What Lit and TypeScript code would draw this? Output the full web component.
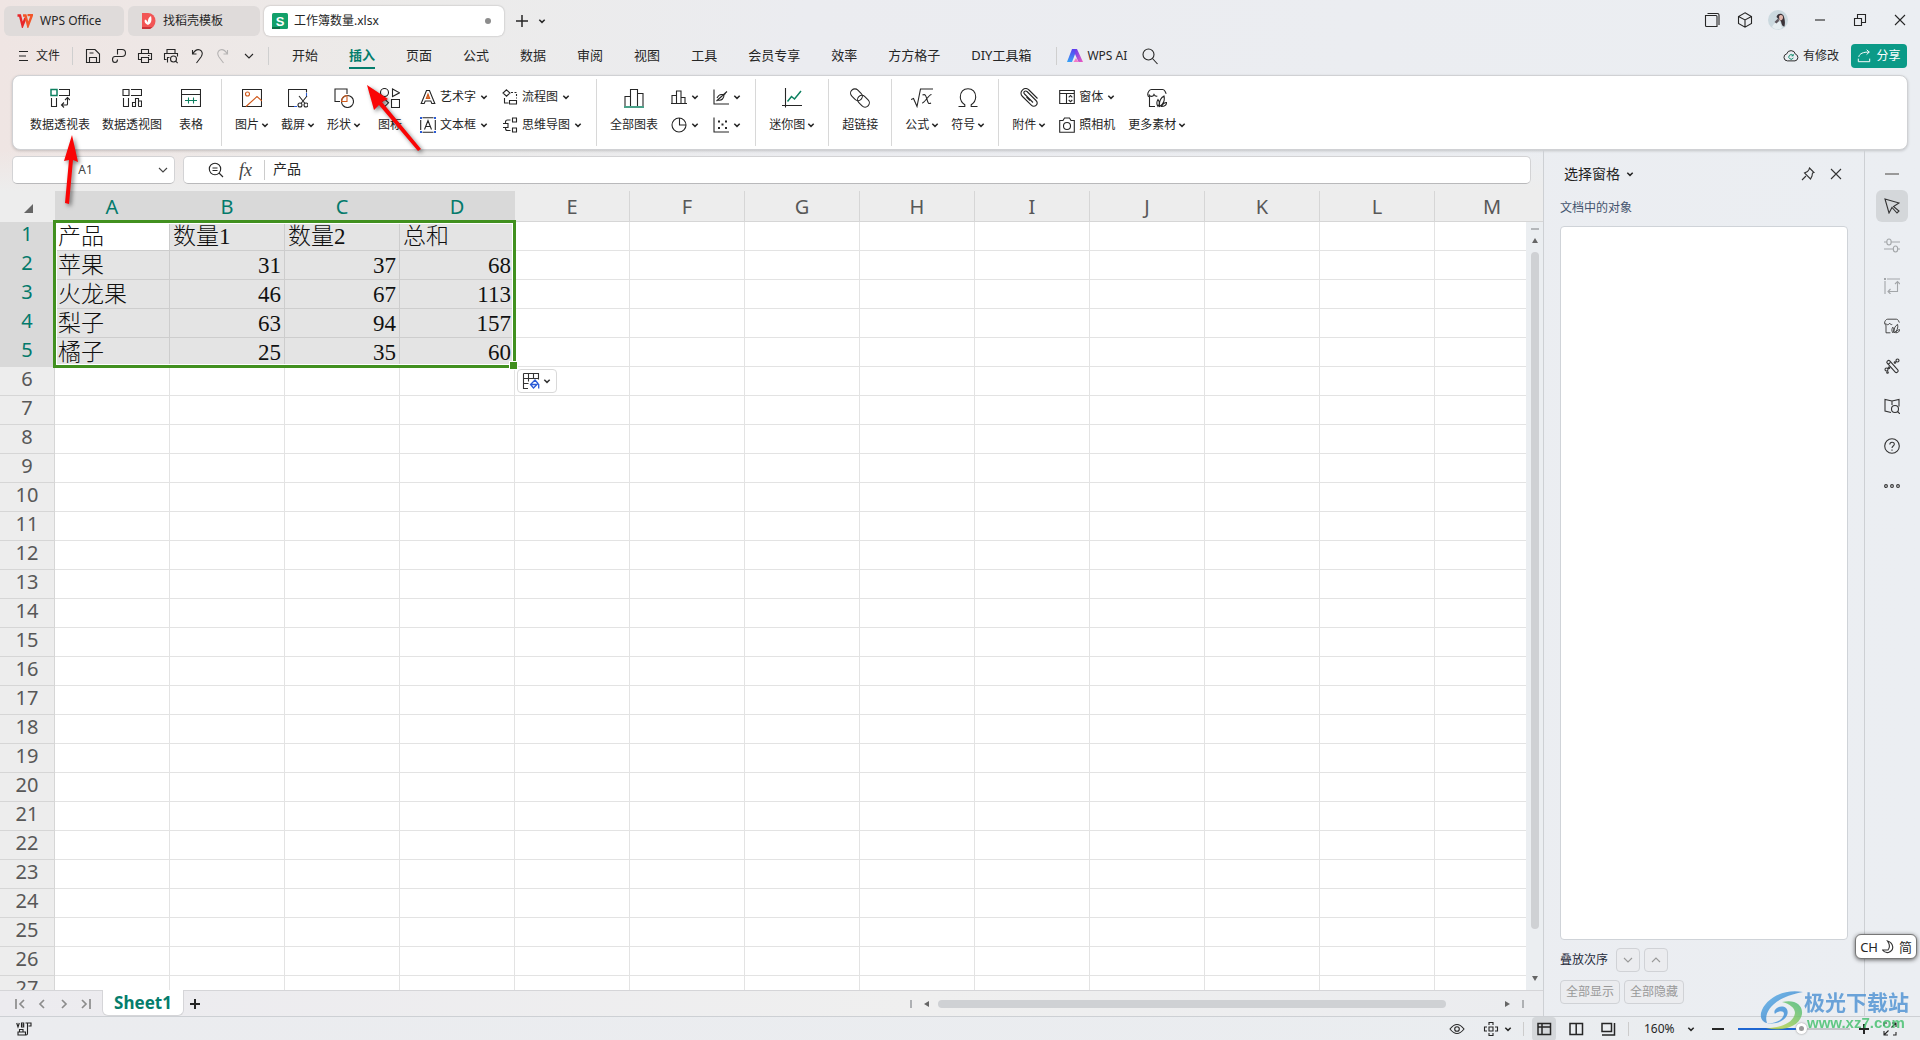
import { LitElement, html, svg, css, nothing, TemplateResult } from "lit";
import { customElement, property, state } from "lit/decorators.js";
import { classMap } from "lit/directives/class-map.js";

/* Line icons, drawn on a square grid whose side is given with each icon. */
const I = {
  menu: [12, svg`<path d="M2 1.5h9M2 6h7M2 10.5h9"/>`],
  save: [16, svg`<path d="M1.5 14.5v-13h8.500l4.500 4.500v8.500zM4.500 14.500v-5h7v5M4.500 5h4"/>`],
  output: [16, svg`<path d="M6.500 6.500V1.500h4.500a3.500 3.500 0 0 1 0 7H4q-2.500 0-2.500 3T4 14.500t2.500-3"/>`],
  print: [16, svg`<path d="M4.500 5V1.500h7V5M4 11.500H1.500V5.500h13v6H12M4.500 9.500h7v5h-7zM11 7.500h1.500"/>`],
  preview: [16, svg`<path d="M4 5V1.500h8V5M3.500 11.500h-2V5.500h13v3M4.500 14.500v-5h2"/><circle cx="10.500" cy="11" r="3"/><path d="M12.700 13.200l2 2"/>`],
  undo: [16, svg`<path d="M3.500 2v4H7.500M3.700 5.800C5.500 3 8.500 .8 11 2s3 4.200 1 7L7.500 15"/>`],
  redo: [16, svg`<path d="M12.500 2v4H8.500M12.300 5.800C10.500 3 7.500 .8 5 2s-3 4.200-1 7l4.500 6"/>`],
  down: [10, svg`<path d="M1 3l4 4 4-4"/>`],
  up: [10, svg`<path d="M1 7l4-4 4 4"/>`],
  caret: [8, svg`<path stroke-width="1.500" d="M1.300 2.800L4 5.400l2.700-2.600"/>`],
  search: [18, svg`<circle cx="7.500" cy="7.500" r="5.500"/><path d="M11.500 11.500l5 5.500"/>`],
  windows: [16, svg`<path d="M1.500 3.500h10.500a1 1 0 0 1 1 1v10H2.500a1 1 0 0 1-1-1zM3.500 1.500h10a1.500 1.500 0 0 1 1.500 1.500v10"/>`],
  cube: [16, svg`<path d="M8 .8l6.500 3.700v7L8 15.200 1.500 11.500v-7zM1.500 4.500L8 8l6.500-3.500M8 8v7.200"/>`],
  min: [12, svg`<path d="M1 6h10"/>`],
  restore: [14, svg`<path d="M1.500 5.500h7v7h-7zM4.500 5.500v-4h8v8h-4"/>`],
  close: [12, svg`<path d="M1 1l10 10M11 1L1 11"/>`],
  cloud: [18, svg`<path d="M5 14.500a4 4 0 0 1-.800-7.900 5 5 0 0 1 9.700.300 3.900 3.900 0 0 1-.400 7.600z"/><path stroke="#0d8a6c" d="M11.300 8.500a2.600 2.600 0 1 0 .3 2.500M11.500 6.800v2H9.500"/>`],
  share: [16, svg`<path d="M2 9c1-4 5-5.500 12-5.500M11 .8l3 2.700-3 2.800M1.500 11v3.500h13V11"/>`],
  pivot: [20, svg`<path stroke="#0d8060" stroke-width="1.500" d="M1 1.500h6v6H1z"/><path d="M9 1.500h10.500v6H9M1.500 10v8.500h5V10M17.500 10v6q0 1-1 1h-5M14 14.500L11.500 17l2.500 2.500M15 12l2.500-2.500L20 12"/>`],
  pivotChart: [20, svg`<path d="M1 1.500h6v6H1zM9 1.500h10.500v6H9M1.500 10v8.500h5V10M10.500 18.500v-4h3v4zM13.500 18.500v-8h3v8M16.500 13h3v5.500h-3"/>`],
  table: [20, svg`<path d="M.500 1.500h19v17H.500zM.500 6.500h19"/><path stroke="#0d8060" d="M4 12.500h12M7.500 9.500v6M12.500 9.500v6"/>`],
  picture: [20, svg`<path d="M.500 1.500h19v17H.500z"/><g stroke="#d05a1c"><circle cx="5.500" cy="6" r="2"/><path d="M4 18.500L15 8.500l5 4.500"/></g>`],
  cut: [20, svg`<path d="M6 18.500H.500v-17h18v3"/><path stroke="#2a5bd7" d="M18.500 5v3.500M6 18.500h3"/><path d="M11 8l6 7.500M19 8l-6 7.500"/><circle cx="12" cy="17" r="2"/><circle cx="18" cy="17" r="2"/>`],
  shapes: [20, svg`<path d="M6 13.500H1V1h12v5"/><circle cx="13.500" cy="13.500" r="6"/><path stroke="#d05a1c" d="M7.500 13.500c.300-3.500 2.500-5.700 5.500-6v6z"/>`],
  symbols: [20, svg`<circle cx="4.500" cy="4.500" r="4"/><path d="M12.500 1v7.500l7-3.700zM4.500 10.800l4 4-4 4-4-4zM11.500 11.500h8v8h-8z"/>`],
  wordArt: [16, svg`<path d="M1.200 14.500L6.500 1.500h3l5.300 13h-3l-1-2.500H5.200l-1 2.500z"/><path fill="#e07b3c" stroke="#d05a1c" d="M6.300 9.500L8 5l1.700 4.500z"/>`],
  textBox: [16, svg`<path d="M2.500.700h11M2.500 15.300h11M.7 3v10M15.300 3v10M4.500 12.500L8 3.500l3.500 9M5.700 9.500h4.600"/><path stroke="#2a5bd7" stroke-width="2" d="M0 1h2M14 1h2M0 15h2M14 15h2"/>`],
  flow: [16, svg`<path d="M4.500.8L8 4 4.500 7.200 1 4zM2.500 9v5h4M7.500 11.500h7v3.500h-7z"/><path stroke-dasharray="2 1.500" d="M9 3.500h5.500v6"/>`],
  mind: [16, svg`<path d="M1 6.500h5v4H1M10.500 1h4v4h-4zM10.500 11h4v4h-4zM3.500 6.500V5q0-2 2-2h3M3.500 10.500v1q0 2 2 2h3"/>`],
  chart: [20, svg`<path d="M1 18V8.500h5.500M6.500 18V1.500h7V18M13.500 5.500H19V18"/><path stroke="#0d8060" stroke-width="1.500" d="M0 19h20"/>`],
  bars: [16, svg`<path d="M1 14V6.500h4.500M5.500 14V2h4.500v12M10 8.500h4V14M0 14.500h16"/>`],
  line: [16, svg`<path d="M1 .5v14.500h15M3.500 12L14 2.500M4 9q2-4 5-3.500T12.500 4M5 11c4 1 6-2 6-5"/>`],
  pie: [16, svg`<circle cx="8" cy="8" r="7"/><path d="M8.500 1v7H15"/>`],
  scatter: [16, svg`<path d="M1 .5v14.500h15"/><path stroke-width="2" d="M5 4.500h2M12 4.500h2M8.500 7.500h2M5 11h2M12 11h2"/>`],
  spark: [20, svg`<path d="M3.500 0v19.500M0 17.500h20"/><path stroke="#0d8060" stroke-width="1.500" d="M5.500 13.500l4-5 3 2.500 6.500-8"/>`],
  link: [22, svg`<rect x="1" y="3.500" width="13" height="8.500" rx="4.200" transform="rotate(45 7.500 7.700)"/><rect x="8" y="10" width="13" height="8.500" rx="4.200" transform="rotate(45 14.500 14.200)"/>`],
  formula: [22, svg`<path d="M0 12.500l2.500-1L6 19.500 9.500 2H22M11.500 8c3-1.500 3.500 1 4.500 4.500s1.500 5 4 3.500M20.500 7.500c-3 0-7 9-9.500 8.500"/>`],
  omega: [22, svg`<path d="M1.500 19.500h6.300v-1.800C5 15.900 3.300 13.400 3.300 10c0-5 3.200-8.300 7.700-8.300s7.700 3.300 7.700 8.300c0 3.400-1.700 5.900-4.500 7.700v1.800h6.300"/>`],
  clip: [20, svg`<path d="M14 14.500L5.500 6c-1.700-1.700.8-4.200 2.500-2.500l9 9c3.200 3.200-1.500 8-4.700 4.700L3.500 8.500C-1 4 5.500-2 10 2l8.500 8.500M11 12.500L7.500 9"/>`],
  form: [16, svg`<path d="M.7 1.500h14.600v13H.7zM.7 4.500h14.600M7.500 4.500v10"/><path d="M9.700 8.300l1.800-1.700 1.800 1.700M9.700 11l1.800 1.700 1.800-1.700"/>`],
  camera: [16, svg`<path d="M.7 3.500H4L5.500 1h5L12 3.500h3.300v11.800H.7z"/><circle cx="8" cy="9" r="3.500"/>`],
  material: [20, svg`<path d="M8 18.500H2.500V9C0 8 .5 5 1.800 3.200Q3 1.500 4.500 1.500h11q1.500 0 2.500 1.700l1.200 2.500M2 6.500c1 2.500 4 2.500 5 0 .8 1.500 2 2 3.300 1.500"/><path d="M11 18.500c-2-3-1-5.500 0-7 1.500 2 2 4.500 0 7zM12.500 18.500C12 14 13.500 10 17 8c1 4-.5 8.500-4.500 10.500zM14.500 18.500c1-2 3-4 5-4 0 2.500-2 4-5 4z"/>`],
  zoomOut: [16, svg`<circle cx="7" cy="7" r="5.700"/><path d="M11 11l4 4M4.500 6h5M4.500 8.500h5"/>`],
  pin: [14, svg`<path d="M8.500 1l4.500 4.500-1.500.5-.500 3-1.500 3-6-6 3-1.500L8 2.500zM5 9l-4 4"/>`],
  pointer: [16, svg`<path d="M1 1l14 4-5.500 3.500L15 13l-2 2-5-5.500L5 15z"/>`],
  sliders: [16, svg`<ellipse cx="5" cy="4" rx="2.200" ry="3"/><ellipse cx="11.500" cy="11" rx="2.200" ry="3"/><path d="M0 4h2.800M7.200 4H16M0 11h9.300M13.700 11H16"/>`],
  transform: [16, svg`<path d="M3 1h13M1 3v13M13.500 4v9.500H4.500M11 6l2.500-2.500L16 6M6.500 11L4 13.500 6.500 16"/><path stroke-width="2" d="M0 1h2"/>`],
  wand: [16, svg`<rect x="-1.700" y="-7.500" width="3.400" height="15" rx="1.500" transform="translate(8.500 8.500) rotate(-42)"/><path d="M4 6.500l2.500-2.200"/><circle cx="13.500" cy="2.500" r="1.500"/><circle cx="11" cy="4.500" r=".8"/><circle cx="2.500" cy="11.500" r="1.500"/><circle cx="5" cy="9.800" r=".8"/><circle cx="3.500" cy="14.500" r=".8"/>`],
  book: [16, svg`<path d="M7 14.500L1 13V1.500L8 3l7-1.500v7M8 3v4"/><circle cx="11" cy="11" r="3.500"/><path d="M13.500 13.500L16 16"/>`],
  help: [16, svg`<circle cx="8" cy="8" r="7.300"/><path d="M5.800 6.500c0-3 4.500-3 4.500-.300C10.300 8 8 8 8 10M8 11.500v1.300"/>`],
  dots: [16, svg`<circle cx="2" cy="8" r="1.400"/><circle cx="8" cy="8" r="1.400"/><circle cx="14" cy="8" r="1.400"/>`],
  eye: [16, svg`<path d="M1 8q7-9 14 0-7 9-14 0z"/><circle cx="8" cy="8" r="2.300"/>`],
  target: [16, svg`<path d="M6 6h4v4H6zM6 4V1.500h4V4M6 12v2.500h4V12M4 6H1.500v4H4M12 6h2.500v4H12"/>`],
  normal: [16, svg`<path stroke-width="1.500" d="M2 2.500h12.500v11H2zM2 6h12.500M6 2.500v11"/>`],
  page: [16, svg`<path stroke-width="1.500" d="M2 2.500h12.500v11H2zM8.200 2.500v11"/>`],
  breaks: [16, svg`<path stroke-width="1.500" d="M2 2.500h9.500v8H2zM14.500 2v12H2"/>`],
  plus: [14, svg`<path stroke-width="1.500" d="M7 1v12M1 7h12"/>`],
  bigPlus: [12, svg`<path stroke-width="2" d="M6 1v10M1 6h10"/>`],
  bigMinus: [12, svg`<path stroke-width="2" d="M0 6h12"/>`],
  full: [16, svg`<path d="M10 2h4v4M14 2L9.500 6.500M6 14H2v-4M2 14l4.500-4.500M2 5V2h3M14 11v3h-3"/>`],
  first: [12, svg`<path stroke-width="1.700" d="M2 1v10M10 2L6 6l4 4"/>`],
  prev: [12, svg`<path stroke-width="1.700" d="M8 2L4 6l4 4"/>`],
  next: [12, svg`<path stroke-width="1.700" d="M4 2l4 4-4 4"/>`],
  last: [12, svg`<path stroke-width="1.700" d="M10 1v10M2 2l4 4-4 4"/>`],
  fill: [18, svg`<path d="M1.500 1.500h15v6M1.500 6.500h15M1.500 1.500v15H6M1.500 11.500h5M6.500 1.500v8M11.500 1.500v5"/><path stroke="#2a5bd7" stroke-width="1.300" d="M8.500 12.500L13 8l3 3.500-4.500 4.500zM8.500 12.500h6.500M16.700 12v4.500"/>`],
} as const;
type Icon = keyof typeof I;

const icon = (name: Icon, size?: number): TemplateResult => {
  const [box, body] = I[name];
  const s = size ?? box;
  return html`<svg width=${s} height=${s} viewBox="0 0 ${box} ${box}" fill="none" stroke="currentColor"
    stroke-width="1.100" aria-hidden="true">${body}</svg>`;
};

const shared = css`
  * { box-sizing: border-box; }
  svg { display: block; flex: none; }
  button, input, select {
    font: inherit; color: inherit; background: none; border: 0; padding: 0; margin: 0; outline: 0; border-radius: 0;
  }
  button { display: flex; align-items: center; justify-content: center; white-space: nowrap; flex: none; }
`;

@customElement("tool-button")
class ToolButton extends LitElement {
  @property() icon: Icon = "table";
  @property() label = "";
  @property({ type: Boolean }) menu = false;
  @property({ type: Boolean }) small = false;
  static styles = [shared, css`
    :host { display: block; }
    .tool { min-width: 34px; flex-direction: column; gap: 8px; line-height: 16px; }
    .tool .art { height: 22px; display: flex; align-items: center; }
    .text { display: flex; align-items: center; gap: 2px; }
    .small { gap: 4px; line-height: 16px; height: 16px; }
    .small .text { gap: 4px; }
  `];
  render() {
    const caret = this.menu ? icon("caret") : nothing;
    if (!this.small) {
      return html`<button class="tool"><span class="art">${icon(this.icon)}</span>
        <span class="text">${this.label}${caret}</span></button>`;
    }
    return this.label
      ? html`<button class="small">${icon(this.icon)}<span class="text">${this.label}${caret}</span></button>`
      : html`<button class="small" aria-label=${this.icon}>${icon(this.icon)}${caret}</button>`;
  }
}

type Tool = [Icon, string, boolean?];
const GROUPS: (Tool | Tool[])[][] = [
  [["pivot", "数据透视表"], ["pivotChart", "数据透视图"], ["table", "表格"]],
  [["picture", "图片", true], ["cut", "截屏", true], ["shapes", "形状", true], ["symbols", "图标"],
    [["wordArt", "艺术字", true], ["textBox", "文本框", true]],
    [["flow", "流程图", true], ["mind", "思维导图", true]]],
  [["chart", "全部图表"], [["bars", "", true], ["pie", "", true]], [["line", "", true], ["scatter", "", true]]],
  [["spark", "迷你图", true]],
  [["link", "超链接"]],
  [["formula", "公式", true], ["omega", "符号", true]],
  [["clip", "附件", true], [["form", "窗体", true], ["camera", "照相机"]], ["material", "更多素材", true]],
];

@customElement("ribbon-bar")
class RibbonBar extends LitElement {
  static styles = [shared, css`
    :host { display: block; }
    .ribbon {
      display: flex; align-items: stretch; gap: 12px; height: 75px; padding: 3px 17px; overflow: hidden;
      background: #fff; border: 1px solid #d0d1d4; border-radius: 8px; font-size: 12px;
      box-shadow: 0 1px 3px rgba(0, 0, 0, .18);
    }
    .sep { width: 1px; margin: 0 1px; background: #d8d8d8; }
    .one { padding-top: 8px; }
    .col { display: flex; flex-direction: column; gap: 12px; padding: 10px 1px 0; }
  `];
  render() {
    const tool = (t: Tool, small = false) =>
      html`<tool-button class=${small ? "" : "one"} .icon=${t[0]} .label=${t[1]} .menu=${!!t[2]} .small=${small}></tool-button>`;
    return html`<div class="ribbon">${GROUPS.map((g, i) => html`
      ${i ? html`<span class="sep"></span>` : nothing}
      ${g.map((t) => Array.isArray(t[0])
        ? html`<div class="col">${(t as Tool[]).map((s) => tool(s, true))}</div>`
        : tool(t as Tool))}`)}</div>`;
  }
}

const DATA: (string | number)[][] = [
  ["产品", "数量1", "数量2", "总和"],
  ["苹果", 31, 37, 68],
  ["火龙果", 46, 67, 113],
  ["梨子", 63, 94, 157],
  ["橘子", 25, 35, 60],
];
const COLS = [..."ABCDEFGHIJKLM"];
const ROWS = Array.from({ length: 27 }, (_, i) => i);

@customElement("sheet-grid")
class SheetGrid extends LitElement {
  static styles = [shared, css`
    :host { display: flex; flex: 1; min-height: 0; position: relative; background: #ededed; }
    .view { flex: 1; min-width: 0; overflow: hidden; position: relative; background: #fff; }
    table { border-collapse: separate; border-spacing: 0; table-layout: fixed; width: 1550px; }
    .rowhead { width: 55px; }
    th {
      font-weight: 400; font-size: 20px; line-height: 24px; color: #585858; background: #ededed; padding: 0;
      border-right: 1px solid #d6d6d6; border-bottom: 1px solid #d6d6d6; text-align: center; vertical-align: top;
    }
    thead th { height: 31px; padding-top: 4px; }
    tbody th { height: 29px; }
    thead th:first-child { border-color: #ededed; }
    .corner { margin: 9px 0 0 24px; }
    th.sel { background: #d9d9d9; border-color: #d9d9d9; color: #037a6b; }
    td {
      height: 29px; padding: 2px 3px 0; border-right: 1px solid #e3e3e3; border-bottom: 1px solid #e3e3e3; vertical-align: top;
      font: 300 23px/26px "Liberation Serif", "Noto Sans CJK SC", serif; color: #111; white-space: nowrap; overflow: hidden;
    }
    td.sel { background: #e4e4e4; border-color: #cdcdcd; }
    td.active { background: #fff; }
    td.num { text-align: right; }
    .range { position: absolute; left: 53px; top: 29px; width: 463px; height: 148px; border: 3px solid #41901f; pointer-events: none; }
    .range::before { content: ""; position: absolute; inset: 0; border: 1px solid #fff; }
    .range::after {
      content: ""; position: absolute; right: -5px; bottom: -5px; width: 7px; height: 7px;
      background: #41901f; border: 1px solid #fff;
    }
    .paste {
      position: absolute; left: 517px; top: 178px; width: 40px; height: 24px; gap: 3px; background: #fff;
      border: 1px solid #d9d9d9; border-radius: 4px; color: #333; padding-right: 2px;
    }
    .vbar { width: 17px; display: flex; flex-direction: column; align-items: center; background: #ebeef1; color: #666; }
    .cap { width: 17px; height: 31px; background: #ededed; border-bottom: 1px solid #d6d6d6; }
    .split { width: 8px; height: 2px; margin: 6px 0 8px; background: #b4b7ba; }
    .thumb { width: 8px; flex: 1; margin: 9px 0 47px; border-radius: 4px; background: #cfd1d4; }
    .tri { width: 0; height: 0; border: 3px solid transparent; }
    .tri.up { border-top: 0; border-bottom: 5px solid #666; }
    .tri.down { border-bottom: 0; border-top: 5px solid #666; margin-bottom: 9px; }
  `];
  render() {
    return html`
      <div class="view">
        <table>
          <colgroup><col class="rowhead">${COLS.map(() => html`<col>`)}</colgroup>
          <thead><tr>
            <th aria-label="全选"><svg class="corner" width="9" height="9"><path d="M9 0v9H0z" fill="#666"/></svg></th>
            ${COLS.map((c, i) => html`<th scope="col" class=${classMap({ sel: i < 4 })}>${c}</th>`)}
          </tr></thead>
          <tbody>${ROWS.map((r) => html`<tr>
            <th scope="row" class=${classMap({ sel: r < 5 })}>${r + 1}</th>
            ${COLS.map((_, c) => {
              const v = DATA[r]?.[c];
              return html`<td class=${classMap({ sel: v !== undefined, active: r === 0 && c === 0, num: typeof v === "number" })}>${v ?? nothing}</td>`;
            })}</tr>`)}</tbody>
        </table>
        <div class="range"></div>
        <button class="paste" aria-label="粘贴选项">${icon("fill")}${icon("caret")}</button>
      </div>
      <div class="vbar">
        <span class="cap"></span><span class="split"></span><span class="tri up"></span>
        <span class="thumb"></span><span class="tri down"></span>
      </div>`;
  }
}

@customElement("selection-pane")
class SelectionPane extends LitElement {
  static styles = [shared, css`
    :host {
      display: flex; flex-direction: column; width: 321px; flex: none; padding: 14px 16px 12px; font-size: 12px; line-height: 18px;
      border-left: 1px solid #cdd0d4;
    }
    .head { display: flex; align-items: center; height: 20px; }
    .title { font-size: 14px; gap: 6px; margin: 0 auto 0 4px; color: #222; }
    .icons { display: flex; gap: 15px; margin-right: 6px; color: #333; }
    .sub { margin: 15px 0 9px; color: #44546e; }
    .list { flex: 1; margin: 0; padding: 0; background: #fff; border: 1px solid #cfd3d8; border-radius: 4px; list-style: none; }
    .order { display: flex; align-items: center; gap: 4px; margin: 8px 0; color: #1f2a3a; }
    .order span { margin-right: 4px; }
    .actions { display: flex; gap: 4px; }
    .box { height: 24px; border: 1px solid #d0d2d6; border-radius: 4px; color: #999; padding: 0 5px; background: #ebecef; }
    .order .box { width: 24px; padding: 0; }
  `];
  render() {
    return html`
      <div class="head">
        <button class="title">选择窗格${icon("caret")}</button>
        <div class="icons"><button aria-label="固定">${icon("pin")}</button><button aria-label="关闭">${icon("close")}</button></div>
      </div>
      <div class="sub">文档中的对象</div>
      <ul class="list" aria-label="文档中的对象"></ul>
      <div class="order"><span>叠放次序</span>
        <button class="box" aria-label="下移">${icon("down")}</button>
        <button class="box" aria-label="上移">${icon("up")}</button></div>
      <div class="actions"><button class="box">全部显示</button><button class="box">全部隐藏</button></div>`;
  }
}

const MENUS = ["开始", "插入", "页面", "公式", "数据", "审阅", "视图", "工具", "会员专享", "效率", "方方格子", "DIY工具箱"];
const QUICK: [Icon, string][] = [["save", "保存"], ["output", "输出"], ["print", "打印"], ["preview", "打印预览"], ["undo", "撤销"], ["redo", "恢复"]];
const RAIL: [Icon, string][] = [["pointer", "选择"], ["sliders", "属性"], ["transform", "变换"], ["material", "素材"],
  ["wand", "美化"], ["book", "查找"], ["help", "帮助"], ["dots", "更多"]];

@customElement("app-root")
class AppRoot extends LitElement {
  @state() private zoom = 57;
  static styles = [shared, css`
    :host {
      display: flex; flex-direction: column; height: 100vh; overflow: hidden; position: relative; color: #262626;
      font: 12px/16px "Noto Sans", "Noto Sans CJK SC", sans-serif;
      background: linear-gradient(90deg, #efe5e3 0, #ecebea 22%, #ebecf0 42%, #ebeef2 100%);
    }
    .top { display: flex; height: 36px; align-items: flex-end; }
    .tabs { display: flex; gap: 4px; padding-left: 4px; flex: 1; align-items: center; }
    .tab { height: 30px; border-radius: 6px; background: #dfdbda; justify-content: flex-start; gap: 7px; padding: 0 13px; }
    .home { width: 120px; }
    .docer { width: 132px; }
    .file { width: 240px; padding: 0 13px 0 8px; gap: 6px; background: #fff; box-shadow: 0 0 2px rgba(0, 0, 0, .3); }
    .dot { width: 6px; height: 6px; border-radius: 3px; background: #8c8c8c; margin-left: auto; }
    .add { width: 28px; height: 30px; margin-right: -2px; }
    .win { display: flex; height: 32px; align-items: center; }
    .win button { width: 33px; height: 32px; }
    .win .ctl { width: 40px; }
    .win .avatar { margin-right: 6px; }
    .menu { display: flex; height: 39px; align-items: center; padding: 0 13px 0 17px; }
    .filebtn { gap: 7px; }
    .bar { width: 1px; height: 18px; background: #cfcfcf; flex: none; }
    .filebtn + .bar { margin: 0 7px 0 12px; }
    .quick { display: flex; }
    .quick button { width: 26px; height: 26px; }
    .quick .off { color: #b5b3b3; }
    .quick + .bar { margin: 0 23px 0 6px; }
    nav { display: flex; gap: 31px; font-size: 13px; line-height: 20px; padding-top: 1px; margin-right: 25px; }
    nav a { color: inherit; text-decoration: none; white-space: nowrap; border-bottom: 2px solid transparent; padding-top: 2px; height: 26px; }
    nav a.on { color: #047d6c; font-weight: 700; border-color: #047d6c; }
    .ai { gap: 4px; margin: 0 14px 0 10px; }
    .modified { margin-left: auto; gap: 4px; }
    .share { width: 56px; height: 24px; margin-left: 12px; gap: 5px; color: #fff; background: #0b9a87; border-radius: 4px; }
    ribbon-bar { margin: 0 12px; }
    .main { flex: 1; display: flex; min-height: 0; }
    .book { flex: 1; min-width: 0; display: flex; flex-direction: column; }
    .fx { display: flex; gap: 8px; padding: 6px 12px 7px; background: linear-gradient(rgba(237, 237, 237, 0), #ededed); }
    .field { display: flex; align-items: center; height: 28px; background: #fff; border: 1px solid #d3d3d5; border-bottom-color: #b9b9bb; border-radius: 5px; }
    .name { width: 163px; padding-right: 6px; color: #444; }
    .name input { width: 100%; min-width: 0; text-align: center; }
    .formula { flex: 1; padding-left: 24px; }
    .formula input { flex: 1; min-width: 0; font-size: 14px; padding: 0 0 4px 8px; height: 20px; border-left: 1px solid #ccc; margin-left: 12px; }
    .fn { font: italic 18px/20px "Liberation Serif", serif; margin-left: 15px; color: #444; }
    .sheets { display: flex; height: 26px; flex: none; align-items: center; border-top: 1px solid #d5d5d8; background: linear-gradient(90deg, #ecebef, #efefef 60%, #ebecef); }
    .go { display: flex; color: #8c8c8c; padding-left: 9px; }
    .go button { width: 22px; height: 24px; }
    .sheet {
      width: 82px; height: 26px; margin: -1px 5px 0 5px; background: #fff; border: 1px solid #d5d5d8; border-top: 0;
      border-radius: 0 0 6px 6px; font-size: 17px; font-weight: 700; color: #047d6c;
    }
    .hbar { margin-left: auto; width: 41%; display: flex; align-items: center; padding: 0 19px 0 0; gap: 12px; }
    .hbar .track { flex: 1; height: 8px; border-radius: 4px; background: #cfd1d4; margin: 0 47px 0 -3px; }
    .tick { width: 2px; height: 8px; background: #aeb0b3; }
    .lt, .rt { border: 3px solid transparent; }
    .lt { border-left: 0; border-right: 5px solid #666; }
    .rt { border-right: 0; border-left: 5px solid #666; }
    .rail { width: 56px; border-left: 1px solid #cdd0d4; display: flex; flex-direction: column; align-items: center; gap: 8px; padding: 8px 2px 0 0; color: #333; }
    .rail button { width: 32px; height: 32px; border-radius: 6px; }
    .rail .fold { width: 14px; height: 2px; background: #999; margin: 15px 0 7px; border-radius: 0; }
    .rail .on { background: #d4d7da; }
    .rail .off { color: #a3a6a9; }
    .status { height: 24px; display: flex; gap: 8px; align-items: center; padding: 0 18px 0 12px; border-top: 1px solid #cdd0d4; background: linear-gradient(90deg, #ebecef, #eaedf0); }
    .status button { width: 24px; height: 24px; }
    .status .macro { margin-right: auto; }
    .status .eye { width: 28px; }
    .status .pos { width: 36px; gap: 5px; }
    .status .on { background: #d4d7da; border-radius: 4px; }
    .status .bar { height: 14px; background: #ccc; }
    .status .plus { width: 12px; }
    .percent { display: flex; align-items: center; width: 61px; }
    .percent select { appearance: none; width: 50px; padding-left: 7px; font-size: 12px; }
    input[type="range"] {
      appearance: none; width: 112px; height: 12px; margin: 0;
      background: linear-gradient(90deg, #1f66d1 57%, #c4c6c9 57%) center / 100% 2px no-repeat;
    }
    input[type="range"]::-webkit-slider-thumb {
      appearance: none; width: 11px; height: 11px; border-radius: 50%; background: #999; border: 3px solid #fff; box-shadow: 0 0 2px #888;
    }
    .over { position: absolute; pointer-events: none; }
    .arrows { left: 0; top: 0; filter: drop-shadow(2px 2px 2px rgba(0, 0, 0, .5)); }
    .ime {
      right: 3px; bottom: 81px; height: 25px; padding: 0 4px; display: flex; align-items: center; gap: 4px; font-size: 13px;
      background: #fff; border-radius: 6px; border: 1px solid #777; box-shadow: 0 1px 4px rgba(0, 0, 0, .6);
    }
    .mark { right: 11px; bottom: 8px; display: flex; opacity: .8; white-space: nowrap; }
    .mark b { display: block; font-size: 21px; line-height: 24px; color: #4a90d2; }
    .mark i { display: block; font: 700 15px/18px "Liberation Sans", sans-serif; padding-left: 3px; color: #3fbf6a; }
  `];

  render() {
    return html`
      <header class="top">
        <div class="tabs">
          <button class="tab home">
            <svg width="16" height="14" viewBox="0 0 16 14" fill="none" stroke-width="2.400">
              <path stroke="#e8262a" d="M.5 1.500H3l2.500 10L8.500 4"/><path stroke="#f2562a" d="M6 1.500h2.500l2.500 10L15 1h-4.500"/></svg>
            WPS Office</button>
          <button class="tab docer">
            <svg width="15" height="16" viewBox="0 0 15 16"><path fill="#f25555" d="M1 0h6a7.500 8 0 0 1 0 16H1z"/><path fill="#c93238" d="M1 14h10.500L9 16H1z"/>
              <path fill="#fff" d="M7 12C3 10 3.500 7.500 4 6.500c1.500.5 2.500 2 3 3C6.500 6.500 8 4 10 3c1 4 .5 7.500-3 9z"/></svg>
            找稻壳模板</button>
          <button class="tab file">
            <svg width="16" height="16" viewBox="0 0 16 16"><rect width="16" height="16" rx="1.500" fill="#12a06a"/><path fill="#0b7048" d="M0 14h8v2H0z"/>
              <text x="8" y="12.500" fill="#fff" font-size="13" font-weight="700" text-anchor="middle" font-family="Liberation Sans">S</text></svg>
            工作簿数量.xlsx<span class="dot"></span></button>
          <button class="add" aria-label="新建">${icon("plus")}</button>
          <button aria-label="标签列表">${icon("caret")}</button>
        </div>
        <div class="win">
          <button aria-label="窗口">${icon("windows")}</button>
          <button aria-label="应用">${icon("cube")}</button>
          <button class="avatar" aria-label="账号">
            <svg width="20" height="20" viewBox="0 0 20 20"><circle cx="10" cy="10" r="10" fill="#cbd9df"/>
              <path fill="#3a3238" d="M8.500 7c.5-3.500 5-4.500 7-1.500 1 3 2 6 1 11-2 0-3-2-3.500-5z"/><path fill="#e3b8ae" d="M11 6.500c1-2 4-2 4 1 0 2-2 3.500-3.500 3z"/>
              <path fill="#e6eef1" d="M4 17c2-4 5-6 8-5l2 6c-3 2-7 2-10-1z"/><path fill="#5d565c" d="M6.500 12l4-4 .5 3-2.500 2.500z"/></svg></button>
          <button class="ctl" aria-label="最小化">${icon("min")}</button>
          <button class="ctl" aria-label="还原">${icon("restore")}</button>
          <button class="ctl" aria-label="关闭">${icon("close")}</button>
        </div>
      </header>
      <div class="menu">
        <button class="filebtn">${icon("menu")}文件</button><span class="bar"></span>
        <div class="quick">
          ${QUICK.map(([n, l]) => html`<button class=${n === "redo" ? "off" : ""} aria-label=${l}>${icon(n)}</button>`)}
          <button aria-label="自定义">${icon("down")}</button>
        </div><span class="bar"></span>
        <nav>${MENUS.map((m) => html`<a href="#" class=${m === "插入" ? "on" : ""}>${m}</a>`)}</nav>
        <span class="bar"></span>
        <button class="ai">
          <svg width="16" height="14" viewBox="0 0 16 14">
            <defs><linearGradient id="a" x2="0" y2="1"><stop stop-color="#5a3df0"/><stop offset="1" stop-color="#35a3f5"/></linearGradient>
              <linearGradient id="b" x2="1" y2="1"><stop stop-color="#5a3df0"/><stop offset="1" stop-color="#f25ac0"/></linearGradient></defs>
            <path fill="url(#a)" d="M5 0h5L5 13H0z"/><path fill="url(#b)" d="M7.500 0H10l6 13h-4.500L8 5z"/><path fill="#f27ac8" d="M6.500 13l2.500-4 2.500 4z"/></svg>
          WPS AI</button>
        <button aria-label="搜索">${icon("search")}</button>
        <button class="modified">${icon("cloud", 16)}有修改</button>
        <button class="share">${icon("share", 14)}分享</button>
      </div>
      <ribbon-bar></ribbon-bar>
      <div class="main">
        <div class="book">
          <div class="fx">
            <div class="field name"><input aria-label="名称框" value="A1"><button aria-label="名称列表">${icon("down")}</button></div>
            <div class="field formula">
              <button aria-label="缩小">${icon("zoomOut")}</button><button class="fn" aria-label="插入函数">fx</button>
              <input aria-label="编辑栏" value="产品"></div>
          </div>
          <sheet-grid></sheet-grid>
          <div class="sheets">
            <div class="go">
              <button aria-label="首个">${icon("first")}</button><button aria-label="上一个">${icon("prev")}</button>
              <button aria-label="下一个">${icon("next")}</button><button aria-label="末个">${icon("last")}</button></div>
            <button class="sheet">Sheet1</button><button aria-label="新建工作表">${icon("bigPlus")}</button>
            <div class="hbar"><span class="tick"></span><span class="lt"></span><span class="track"></span><span class="rt"></span><span class="tick"></span></div>
          </div>
        </div>
        <selection-pane></selection-pane>
        <aside class="rail">
          <button class="fold" aria-label="折叠"></button>
          ${RAIL.map(([n, l], i) => html`<button class=${classMap({ on: i === 0, off: i === 1 || i === 2 })} aria-label=${l}>${icon(n, 16)}</button>`)}
        </aside>
      </div>
      <footer class="status">
        <button class="macro" aria-label="宏">
          <svg width="16" height="14" viewBox="0 0 16 14" fill="none" stroke="#222" stroke-width="1.100"><path d="M.7 1L2 5 3.300 1M5.500 1h2.200v4H5.500zM5.500 3h2.200M9.500 1h5.500v3h-2.500M11.500 1v10.500q0 1.500-1.500 1.500H2v-3h7.500v3M3.500 10V7.500H7V10"/></svg></button>
        <button class="eye" aria-label="护眼">${icon("eye")}</button>
        <button class="pos" aria-label="定位">${icon("target")}${icon("caret")}</button>
        <span class="bar"></span>
        <button class="on" aria-label="普通视图">${icon("normal")}</button>
        <button aria-label="页面布局">${icon("page")}</button>
        <button aria-label="分页预览">${icon("breaks")}</button>
        <span class="bar"></span>
        <label class="percent"><select aria-label="缩放比例"><option>160%</option></select>${icon("caret")}</label>
        <button aria-label="缩小">${icon("bigMinus")}</button>
        <input type="range" aria-label="缩放" .value=${String(this.zoom)}>
        <button class="plus" aria-label="放大">${icon("bigPlus")}</button>
        <button aria-label="全屏">${icon("full")}</button>
      </footer>
      <svg class="over arrows" width="440" height="215" fill="#fa0505" aria-hidden="true">
        <path d="M72 135l6 27-5-2-4 44-4-1 4-43-5 1z"/><path d="M367 85l21 14-6 3 39 47-3 2-39-46-5 5z"/></svg>
      <div class="over ime">CH
        <svg width="13" height="14" viewBox="0 0 13 14" fill="none" stroke="#333" stroke-width="1.100"><path d="M5.500 1c6 2 7.500 9 1 11.500-2.500.5-4.500-.5-6-2.500h5.500c2.500-3 1.500-6-.5-9z"/></svg>简</div>
      <div class="over mark">
        <svg width="44" height="42" viewBox="0 0 44 42">
          <defs><linearGradient id="g" x1="0" y1="0" x2="1" y2="1"><stop stop-color="#5ab4ee"/><stop offset="1" stop-color="#2468b8"/></linearGradient>
            <linearGradient id="h" x1="0" y1="1" x2="1" y2="0"><stop stop-color="#cfd93c"/><stop offset="1" stop-color="#3fb87a"/></linearGradient></defs>
          <path fill="url(#g)" d="M43 2C22-2 4 10 1 23c-1 6 2 9 6 10C3 22 14 7 43 2z"/>
          <path fill="#3b8fd8" d="M7 33c8 1 16-3 17-9 0-4-7-3-9 0-3-5 6-10 11-6 6 7-5 18-19 15z"/>
          <path fill="url(#h)" d="M22 12c12-3 21 2 20 12-2 12-18 18-36 14 16 0 28-6 29-15 0-5-5-9-13-11z"/></svg>
        <div><b>极光下载站</b><i>www.xz7.com</i></div>
      </div>`;
  }
}
